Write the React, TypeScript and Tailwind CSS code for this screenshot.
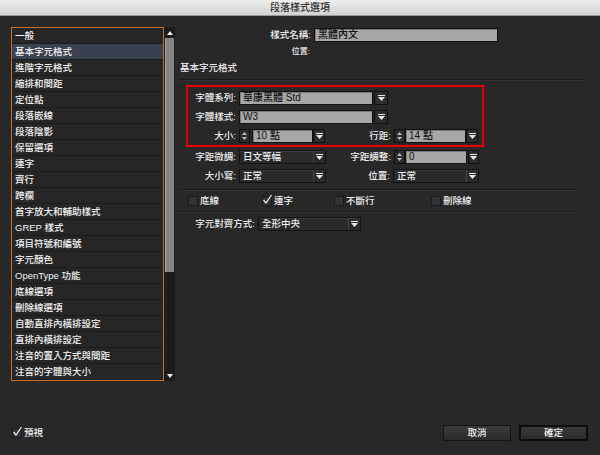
import React from "react";

const ITEMS = [
  "一般",
  "基本字元格式",
  "進階字元格式",
  "縮排和間距",
  "定位點",
  "段落嵌線",
  "段落陰影",
  "保留選項",
  "連字",
  "齊行",
  "跨欄",
  "首字放大和輔助樣式",
  "GREP 樣式",
  "項目符號和編號",
  "字元顏色",
  "OpenType 功能",
  "底線選項",
  "刪除線選項",
  "自動直排內橫排設定",
  "直排內橫排設定",
  "注音的置入方式與間距",
  "注音的字體與大小",
];

function DownArrow() {
  return (
    <svg width="7" height="6" viewBox="0 0 7 6">
      <rect x="0" y="0" width="7" height="1" fill="#e8e8e8" />
      <path d="M0 2h7L3.5 6z" fill="#e8e8e8" />
    </svg>
  );
}

function ArrowBtn({ w = "w-[13px]" }: { w?: string }) {
  return (
    <div className={`${w} h-[14px] bg-[#2d2d2d] border border-[#101010] flex items-center justify-center`}>
      <DownArrow />
    </div>
  );
}

function Spinner() {
  return (
    <div className="w-[11px] h-[14px] bg-[#2b2b2b] border border-[#101010] flex flex-col items-center justify-center gap-[2px]">
      <svg width="5" height="3" viewBox="0 0 5 3">
        <path d="M0 3h5L2.5 0z" fill="#bdbdbd" />
      </svg>
      <svg width="5" height="3" viewBox="0 0 5 3">
        <path d="M0 0h5L2.5 3z" fill="#bdbdbd" />
      </svg>
    </div>
  );
}

function LightField({ text, w }: { text: string; w: string }) {
  return (
    <div className={`${w} h-[14px] bg-[#a7a7a7] border border-[#111] shadow-[inset_1px_1px_0_#7a7a7a] text-[#111] pl-[3px] leading-[12px] text-[10px]`}>
      {text}
    </div>
  );
}

function DarkSelect({ text, w }: { text: string; w: string }) {
  return (
    <div className={`${w} h-[14px] flex bg-[#2a2a2a] border border-[#111] shadow-[inset_0_1px_0_#3a3a3a]`}>
      <div className="flex-1 pl-[3px] leading-[12px] text-[#eee] border-r border-[#444]">{text}</div>
      <div className="w-[11px] flex items-center justify-center">
        <DownArrow />
      </div>
    </div>
  );
}

function Label({ text, w }: { text: string; w: string }) {
  return <div className={`${w} text-right leading-[14px] text-[#eee] pr-[3px]`}>{text}</div>;
}

function Check({ checked, label }: { checked?: boolean; label: string }) {
  return (
    <div className="flex items-center">
      <div className="relative w-[10px] h-[10px] bg-[#333] border border-[#1a1a1a]">
        {checked && (
          <svg className="absolute -left-[1px] -top-[3px]" width="11" height="11" viewBox="0 0 11 11">
            <path d="M1.5 6l2.5 3L9.5 1" stroke="#eee" strokeWidth="1.3" fill="none" />
          </svg>
        )}
      </div>
      <span className="ml-[2px] text-[#eee] leading-[12px]">{label}</span>
    </div>
  );
}

export default function App() {
  return (
    <div className="w-[600px] h-[455px] bg-[#282828] flex flex-col font-['Liberation_Sans','Noto_Sans_CJK_TC',sans-serif] font-medium text-[9.5px] overflow-hidden">
      <div className="h-[16px] bg-gradient-to-b from-[#eeeeee] to-[#d2d2d2] border-b border-[#9a9a9a] flex items-center justify-center text-[10px] text-[#333]">
        段落樣式選項
      </div>

      <div className="flex h-[365px]">
        <div className="pl-[11px] pt-[11px] flex">
          <div className="w-[153px] h-[354px] border border-[#c46f2c] bg-[#262626] overflow-hidden">
            {ITEMS.map((it, i) => (
              <div
                key={i}
                className={`h-[16px] pl-[3px] leading-[15px] text-[#f2f2f2] border-b border-[#1b1b1b] ${
                  i === 1 ? "bg-[#3b4150]" : ""
                }`}
              >
                {it}
              </div>
            ))}
          </div>
          <div className="w-[11px] h-[354px] flex flex-col bg-[#1c1c1c]">
            <div className="h-[11px] flex items-center justify-center">
              <svg width="6" height="4" viewBox="0 0 6 4">
                <path d="M0 4h6L3 0z" fill="#eee" />
              </svg>
            </div>
            <div className="h-[234px] mx-[1px] bg-[#858585] border-l border-[#a5a5a5]" />
            <div className="flex-1" />
            <div className="h-[11px] flex items-center justify-center">
              <svg width="6" height="4" viewBox="0 0 6 4">
                <path d="M0 0h6L3 4z" fill="#eee" />
              </svg>
            </div>
          </div>
        </div>

        <div className="flex flex-col pl-[5px] pt-[12px] w-[425px]">
          <div className="flex h-[14px]">
            <Label text="樣式名稱:" w="w-[134px]" />
            <LightField text="黑體內文" w="w-[184px]" />
          </div>
          <div className="flex h-[10px] mt-[5px]">
            <div className="w-[130px] text-right text-[8px] leading-[10px] text-[#eee]">位置:</div>
          </div>
          <div className="mt-[4px] h-[14px] leading-[14px] text-[#eee]">基本字元格式</div>
          <div className="mt-[4px] w-[405px] h-[2px] border-t border-[#1a1a1a] border-b border-b-[#333]" />

          <div className="mt-[4px] ml-[6px] w-[298px] h-[62px] border-2 border-[#e60000] pt-[4px] flex flex-col gap-[5px]">
            <div className="flex h-[14px]">
              <Label text="字體系列:" w="w-[51px]" />
              <LightField text="華康黑體 Std" w="w-[134px]" />
              <div className="ml-[1px]" />
              <ArrowBtn w="w-[14px]" />
            </div>
            <div className="flex h-[14px]">
              <Label text="字體樣式:" w="w-[51px]" />
              <LightField text="W3" w="w-[134px]" />
              <div className="ml-[1px]" />
              <ArrowBtn w="w-[14px]" />
            </div>
            <div className="flex h-[14px]">
              <Label text="大小:" w="w-[51px]" />
              <Spinner />
              <div className="ml-[2px]" />
              <LightField text="10 點" w="w-[61px]" />
              <ArrowBtn w="w-[12px]" />
              <Label text="行距:" w="w-[69px]" />
              <Spinner />
              <LightField text="14 點" w="w-[61px]" />
              <ArrowBtn w="w-[12px]" />
            </div>
          </div>

          <div className="ml-[8px] mt-[3px] flex h-[14px]">
            <Label text="字距微調:" w="w-[51px]" />
            <DarkSelect text="日文等幅" w="w-[87px]" />
            <Label text="字距調整:" w="w-[68px]" />
            <Spinner />
            <LightField text="0" w="w-[62px]" />
            <div className="ml-[1px]" />
            <ArrowBtn w="w-[11px]" />
          </div>
          <div className="ml-[8px] mt-[5px] flex h-[14px]">
            <Label text="大小寫:" w="w-[51px]" />
            <DarkSelect text="正常" w="w-[87px]" />
            <Label text="位置:" w="w-[67px]" />
            <DarkSelect text="正常" w="w-[86px]" />
          </div>

          <div className="mt-[6px] w-[399px] h-[2px] border-t border-[#1a1a1a] border-b border-b-[#333]" />
          <div className="mt-[4px] ml-[8px] flex h-[12px] items-center">
            <div className="w-[74px]">
              <Check label="底線" />
            </div>
            <div className="w-[72px]">
              <Check checked label="連字" />
            </div>
            <div className="w-[97px]">
              <Check label="不斷行" />
            </div>
            <Check label="刪除線" />
          </div>
          <div className="mt-[4px] w-[399px] h-[2px] border-t border-[#1a1a1a] border-b border-b-[#333]" />

          <div className="ml-[8px] mt-[4px] flex h-[14px]">
            <Label text="字元對齊方式:" w="w-[70px]" />
            <DarkSelect text="全形中央" w="w-[103px]" />
          </div>
        </div>
      </div>

      <div className="mt-[44px] h-[16px] flex items-center pl-[12px] pr-[12px]">
        <Check checked label="預視" />
        <div className="flex-1" />
        <div className="w-[68px] h-[16px] bg-gradient-to-b from-[#3a3a3a] to-[#2c2c2c] border border-[#141414] text-[#eee] flex items-center justify-center">
          取消
        </div>
        <div className="ml-[8px] w-[69px] h-[16px] bg-gradient-to-b from-[#3a3a3a] to-[#2c2c2c] border-2 border-[#0c0c0c] text-[#eee] flex items-center justify-center">
          確定
        </div>
      </div>
    </div>
  );
}
